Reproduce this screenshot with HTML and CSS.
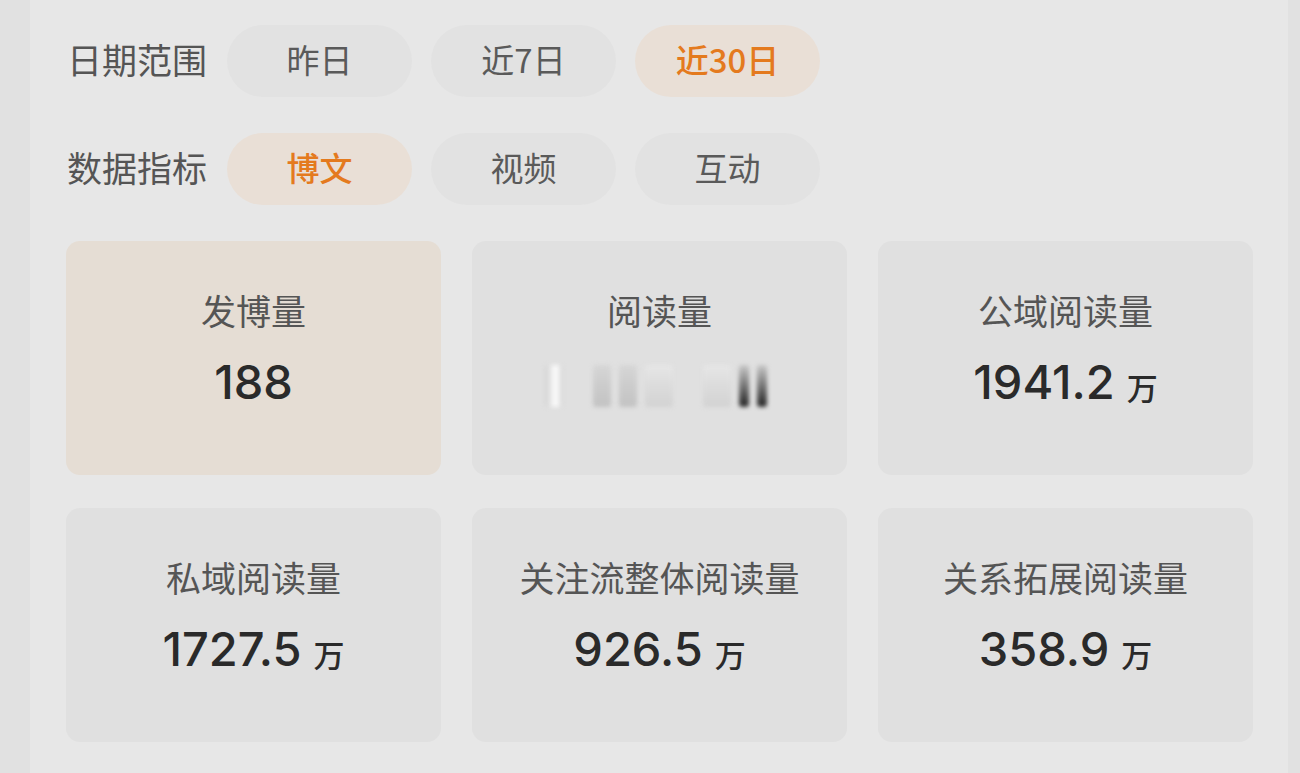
FILE: index.html
```html
<!DOCTYPE html>
<html lang="zh-CN">
<head>
    <meta charset="UTF-8">
    <meta name="viewport" content="width=device-width, initial-scale=1.0">
    <title>数据概览</title>
    <link rel="stylesheet" href="styles.css">
</head>
<body>

    <!-- Main panel -->
    <div class="panel">

        <!-- Filters -->
        <div class="filter-row">
            <div class="filter-label">日期范围</div>
            <div class="pill">昨日</div>
            <div class="pill">近7日</div>
            <div class="pill active">近30日</div>
        </div>

        <div class="filter-row">
            <div class="filter-label">数据指标</div>
            <div class="pill active">博文</div>
            <div class="pill">视频</div>
            <div class="pill">互动</div>
        </div>

        <!-- Stat cards -->
        <div class="stats">
            <div class="card active">
                <div class="card-title">发博量</div>
                <div class="card-value">188</div>
            </div>
            <div class="card">
                <div class="card-title">阅读量</div>
                <div class="card-value">
                    <div class="masked">
                        <span class="bar light"></span>
                        <span class="bar gap"></span>
                        <span class="bar mid"></span>
                        <span class="bar mid"></span>
                        <span class="bar soft"></span>
                        <span class="bar gap"></span>
                        <span class="bar soft"></span>
                        <span class="bar dark"></span>
                        <span class="bar dark"></span>
                    </div>
                </div>
            </div>
            <div class="card">
                <div class="card-title">公域阅读量</div>
                <div class="card-value">1941.2<span class="unit">万</span></div>
            </div>
            <div class="card">
                <div class="card-title">私域阅读量</div>
                <div class="card-value">1727.5<span class="unit">万</span></div>
            </div>
            <div class="card">
                <div class="card-title">关注流整体阅读量</div>
                <div class="card-value">926.5<span class="unit">万</span></div>
            </div>
            <div class="card">
                <div class="card-title">关系拓展阅读量</div>
                <div class="card-value">358.9<span class="unit">万</span></div>
            </div>
        </div>

    </div>

</body>
</html>
```

FILE: styles.css
```css
/* General reset */
* {
    margin: 0;
    padding: 0;
    box-sizing: border-box;
    font-family: "Noto Sans CJK SC", "Noto Sans", sans-serif;
}

body {
    display: flex;
    min-height: 100vh;
    background-color: #e1e1e1;
    color: #555;
}

/* Main panel */
.panel {
    width: 1258px;
    margin-left: 30px;
    padding: 25px 35px 0 36px;
    background-color: #e7e7e7;
}

/* Filter rows */
.filter-row {
    display: flex;
    align-items: center;
    gap: 19px;
    margin-bottom: 36px;
}

.filter-label {
    width: 142px;
    padding-left: 1px;
    padding-bottom: 4px;
    font-size: 35px;
    color: #555;
    line-height: 68px;
}

.pill {
    width: 185px;
    height: 72px;
    padding-bottom: 4px;
    border-radius: 36px;
    background-color: #e2e2e2;
    color: #5a5a5a;
    font-size: 33px;
    display: flex;
    align-items: center;
    justify-content: center;
}

.pill.active {
    background-color: #e9dfd6;
    color: #e47a1e;
    font-weight: 500;
}

/* Stat cards */
.stats {
    display: grid;
    grid-template-columns: repeat(3, 375px);
    column-gap: 31px;
    row-gap: 33px;
}

.card {
    height: 234px;
    border-radius: 14px;
    background-color: #e0e0e0;
    padding-top: 47px;
    display: flex;
    flex-direction: column;
    align-items: center;
}

.card.active {
    background-color: #e5ddd4;
}

.card-title {
    font-size: 35px;
    line-height: 44px;
    color: #555;
}

.card-value {
    margin-top: 22px;
    height: 56px;
    font-family: Inter, "Noto Sans CJK SC", sans-serif;
    font-size: 47px;
    font-weight: 500;
    line-height: 56px;
    color: #2a2a2a;
    display: flex;
    align-items: center;
}

.unit {
    font-family: "Noto Sans CJK SC", sans-serif;
    font-size: 31px;
    font-weight: 500;
    margin-left: 12px;
    margin-top: 10px;
}

/* Hidden value (blurred) */
.masked {
    display: flex;
    align-items: stretch;
    gap: 8px;
    height: 42px;
    width: 222px;
    margin-left: -8px;
    margin-top: 8px;
    filter: blur(2px);
}

.bar {
    width: 18px;
    border-radius: 3px;
}

.bar.gap {
    width: 14px;
}

.bar.light {
    background: linear-gradient(90deg, #cfcfcf, #ffffff 60%, #d4d4d4);
}

.bar.mid {
    background: linear-gradient(180deg, #d6d6d6, #c2c2c2);
}

.bar.soft {
    width: 28px;
    background: linear-gradient(180deg, #e6e6e6, #d2d2d2);
}

.bar.dark {
    width: 10px;
    background: linear-gradient(180deg, #c8c8c8, #333 90%);
}
```
